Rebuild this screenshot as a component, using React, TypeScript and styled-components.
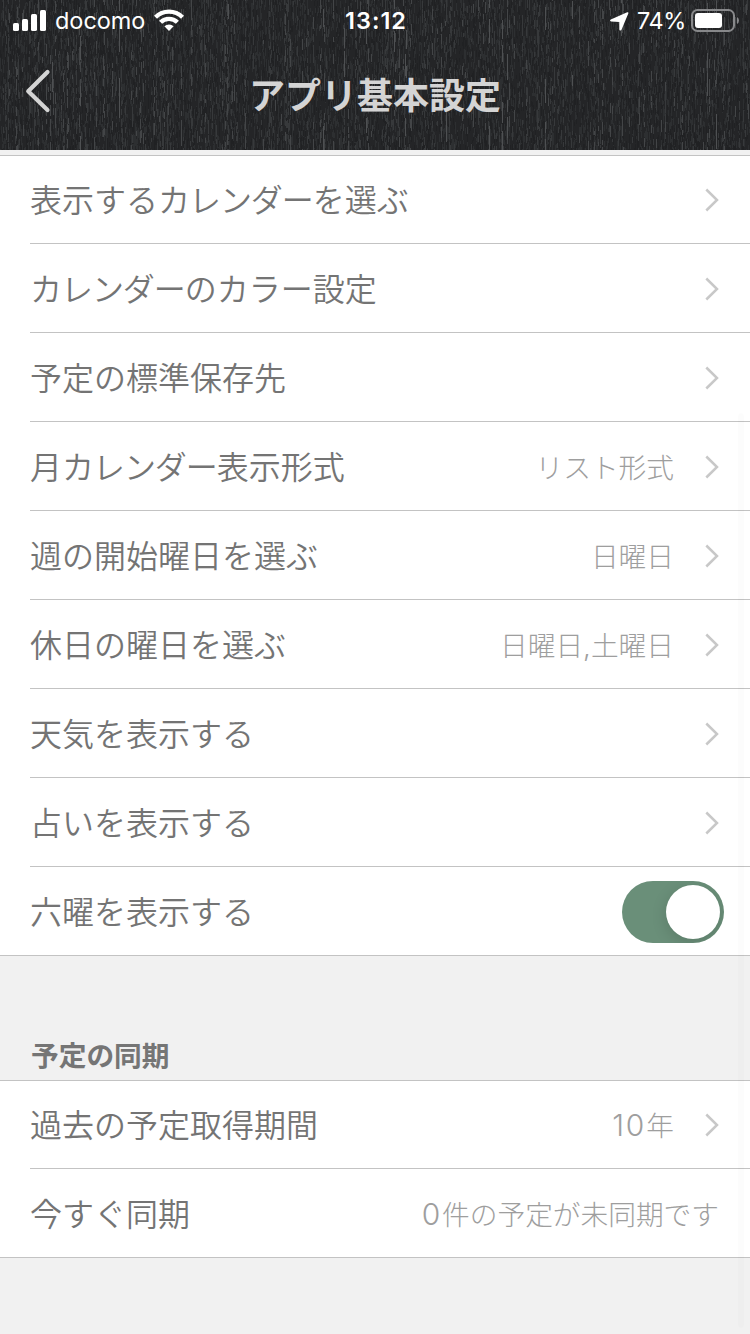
import React from "react";
import styled, { createGlobalStyle } from "styled-components";

const GlobalStyle = createGlobalStyle`
  * { box-sizing: border-box; }
  body { margin: 0; background: #f1f1f1; font-family: Inter, "Noto Sans CJK JP", sans-serif; }
`;

const Screen = styled.div`
  position: relative;
  width: 750px;
  height: 1334px;
  overflow: hidden;
  background: #f1f1f1;
`;

const Header = styled.header`
  position: relative;
  height: 150px;
  background: #242527;
  overflow: hidden;
`;

const Grain = styled.svg`
  position: absolute;
  inset: 0;
`;

const StatusBar = styled.div`
  position: relative;
  height: 40px;
  padding: 0 11px 0 13px;
  display: grid;
  grid-template-columns: 1fr auto 1fr;
  align-items: center;
  color: #fff;
  font-size: 23.5px;
  line-height: 38px;
`;

const StatusSide = styled.div<{ $end?: boolean }>`
  display: flex;
  align-items: center;
  justify-content: ${(p) => (p.$end ? "flex-end" : "flex-start")};
`;

const Carrier = styled.span`
  padding-top: 2px;
  margin: 0 9px 0 9px;
  letter-spacing: -0.05px;
`;

const Clock = styled.span`
  padding-top: 2px;
  font-weight: 600;
  letter-spacing: 1px;
`;

const Percent = styled.span`
  padding-top: 2px;
  margin: 0 5px 0 8px;
  letter-spacing: -0.4px;
`;

const LocationIcon = styled.svg`
  margin-top: 3px;
`;

const NavBar = styled.div`
  position: relative;
  height: 110px;
  display: grid;
  grid-template-columns: 100px 1fr 100px;
  align-items: center;
`;

const BackButton = styled.button`
  border: 0;
  padding: 0 0 8px 23px;
  background: none;
  display: flex;
`;

const Title = styled.h1`
  margin: 0;
  text-align: center;
  font-family: "Noto Sans CJK JP", sans-serif;
  font-size: 36px;
  font-weight: 700;
  line-height: 106px;
  padding-bottom: 4px;
  color: #d4d4d4;
`;

const Section = styled.section`
  background: #fff;
  border-top: 1px solid #c3c3c3;
  border-bottom: 1px solid #c3c3c3;
`;

const Content = styled.main`
  padding-top: 5px;
`;

const Row = styled.div`
  height: 89px;
  margin-left: 30px;
  padding: 2px 31px 0 0;
  display: flex;
  align-items: center;
  border-bottom: 1px solid #c3c3c3;
  &:first-child { height: 88px; padding-top: 1px; }
  &:last-child { height: 88px; border-bottom: 0; }
`;

const Label = styled.span`
  flex: 1;
  padding-bottom: 4px;
  font-family: "Noto Sans CJK JP", sans-serif;
  font-size: 32px;
  font-weight: 350;
  line-height: 80px;
  color: #747474;
`;

const Value = styled.span`
  padding-top: 2px;
  font-family: Inter, "Noto Sans CJK JP", sans-serif;
  font-size: 27.7px;
  font-weight: 300;
  line-height: 80px;
  color: #9e9e9e;
`;

const Tight = styled.span`
  letter-spacing: -1.05px;
`;

const Digits = styled.span`
  font-size: 30px;
  line-height: 0;
  letter-spacing: 1.9px;
`;

const ArrowIcon = styled.svg`
  margin-left: 31px;
`;

const Toggle = styled.button`
  width: 102px;
  height: 62px;
  margin-right: -5px;
  padding: 4px;
  border: 0;
  border-radius: 31px;
  background: #6a8f79;
  display: flex;
  justify-content: flex-end;
  overflow: hidden;
`;

const Knob = styled.span`
  width: 54px;
  height: 54px;
  border-radius: 50%;
  background: #fff;
  box-shadow: 0 4px 16px rgba(0, 0, 0, 0.14);
`;

const SectionTitle = styled.h2`
  height: 124px;
  margin: 0;
  padding: 74px 31px 0;
  font-family: "Noto Sans CJK JP", sans-serif;
  font-size: 27.7px;
  font-weight: 700;
  line-height: 48px;
  color: #757575;
`;

const ScrollThumb = styled.div`
  position: absolute;
  right: 6px;
  top: 413px;
  width: 6px;
  height: 915px;
  border-radius: 3px;
  background: rgba(0, 0, 0, 0.012);
`;

/* Short vertical strokes; with `columns` set they gather on that many fixed columns. */
function streaks(seed: number, count: number, min: number, max: number, columns = 0) {
  let s = seed;
  const next = () => {
    s = (s + 0x6d2b79f5) | 0;
    let t = Math.imul(s ^ (s >>> 15), 1 | s);
    t = (t + Math.imul(t ^ (t >>> 7), 61 | t)) ^ t;
    return ((t ^ (t >>> 14)) >>> 0) / 4294967296;
  };
  const fixed = Array.from({ length: columns }, () => Math.floor(next() * 750));
  let d = "";
  for (let i = 0; i < count; i++) {
    const x = columns ? fixed[Math.floor(next() * columns)] : Math.floor(next() * 750);
    const y = Math.floor(next() * 170) - 15;
    d += `M${x + 0.5} ${y}v${Math.round(min + next() * (max - min))}`;
  }
  return d;
}

const GRAIN = [
  { d: streaks(11, 8000, 3, 9), stroke: "#2d2f31" },
  { d: streaks(23, 5200, 3, 8), stroke: "#202123" },
  { d: streaks(37, 2100, 3, 9, 300), stroke: "#37393b" },
  { d: streaks(53, 620, 4, 12, 130), stroke: "#434547" },
  { d: streaks(71, 60, 10, 26, 26), stroke: "#4e5052" },
];

const Arrow = () => (
  <ArrowIcon width="14" height="24" viewBox="0 0 14 24" fill="none">
    <path d="M1.3 1.5 12 12 1.3 22.5" stroke="#c8c8c8" strokeWidth="2.5" />
  </ArrowIcon>
);

/* Sets katakana words slightly closer and gives numerals their own face size. */
const Mixed = ({ text }: { text: string }) => (
  <>
    {text.split(/(カレンダー|\d+)/).map((part, i) => {
      if (/^\d+$/.test(part)) return <Digits key={i}>{part}</Digits>;
      if (part === "カレンダー") return <Tight key={i}>{part}</Tight>;
      return part;
    })}
  </>
);

type Item = { label: string; value?: string; arrow?: boolean; toggle?: boolean };

const DISPLAY: Item[] = [
  { label: "表示するカレンダーを選ぶ", arrow: true },
  { label: "カレンダーのカラー設定", arrow: true },
  { label: "予定の標準保存先", arrow: true },
  { label: "月カレンダー表示形式", value: "リスト形式", arrow: true },
  { label: "週の開始曜日を選ぶ", value: "日曜日", arrow: true },
  { label: "休日の曜日を選ぶ", value: "日曜日,土曜日", arrow: true },
  { label: "天気を表示する", arrow: true },
  { label: "占いを表示する", arrow: true },
  { label: "六曜を表示する", toggle: true },
];

const SYNC: Item[] = [
  { label: "過去の予定取得期間", value: "10年", arrow: true },
  { label: "今すぐ同期", value: "0件の予定が未同期です" },
];

const List = ({ items }: { items: Item[] }) => (
  <Section>
    {items.map((item) => (
      <Row key={item.label}>
        <Label>
          <Mixed text={item.label} />
        </Label>
        {item.value && (
          <Value>
            <Mixed text={item.value} />
          </Value>
        )}
        {item.arrow && <Arrow />}
        {item.toggle && (
          <Toggle>
            <Knob />
          </Toggle>
        )}
      </Row>
    ))}
  </Section>
);

export default function App() {
  return (
    <Screen>
      <GlobalStyle />
      <Header>
        <Grain width="750" height="150" fill="none">
          {GRAIN.map((g) => (
            <path key={g.stroke} d={g.d} stroke={g.stroke} />
          ))}
        </Grain>
        <StatusBar>
          <StatusSide>
            <svg width="33" height="21" viewBox="0 0 33 21" fill="#fff">
              <rect x="0" y="13" width="6" height="8" rx="1.6" />
              <rect x="9" y="9" width="6" height="12" rx="1.6" />
              <rect x="18" y="4" width="6" height="17" rx="1.6" />
              <rect x="27" y="0" width="6" height="21" rx="1.6" />
            </svg>
            <Carrier>docomo</Carrier>
            <svg width="30" height="22" viewBox="0 0 30 22" fill="none" stroke="#fff" strokeWidth="4.3">
              <path d="M1.5 8.2a19.1 19.1 0 0 1 27 0" />
              <path d="M6.6 13.3a11.9 11.9 0 0 1 16.8 0" />
              <path d="M10.4 17.3a6.5 6.5 0 0 1 9.2 0L15 22z" fill="#fff" stroke="none" />
            </svg>
          </StatusSide>
          <Clock>13:12</Clock>
          <StatusSide $end>
            <LocationIcon width="19" height="19" viewBox="0 0 19 19" fill="#fff">
              <path d="M17.2.3Q18.8-.2 18.3 1.4L11.6 17.6Q10.8 19 9.8 18.4 9.3 18 9.3 17.2V10L1 9.6Q-.8 8.4.8 7.4Z" />
            </LocationIcon>
            <Percent>74%</Percent>
            <svg width="48" height="23" viewBox="0 0 48 23">
              <rect x="1" y="1" width="42" height="21" rx="5.5" fill="none" stroke="#87888a" strokeWidth="2" />
              <rect x="4" y="4" width="27" height="15" rx="3" fill="#fff" />
              <path d="M46 8q2 1.2 2 3.5t-2 3.5z" fill="#87888a" />
            </svg>
          </StatusSide>
        </StatusBar>
        <NavBar>
          <BackButton>
            <svg width="28" height="44" viewBox="0 0 28 44" fill="none">
              <path d="M24.5 3 5.2 22.3 24.5 41" stroke="#d4d4d4" strokeWidth="4.2" strokeLinecap="round" strokeLinejoin="round" />
            </svg>
          </BackButton>
          <Title>アプリ基本設定</Title>
        </NavBar>
      </Header>
      <Content>
        <List items={DISPLAY} />
        <SectionTitle>予定の同期</SectionTitle>
        <List items={SYNC} />
      </Content>
      <ScrollThumb />
    </Screen>
  );
}
